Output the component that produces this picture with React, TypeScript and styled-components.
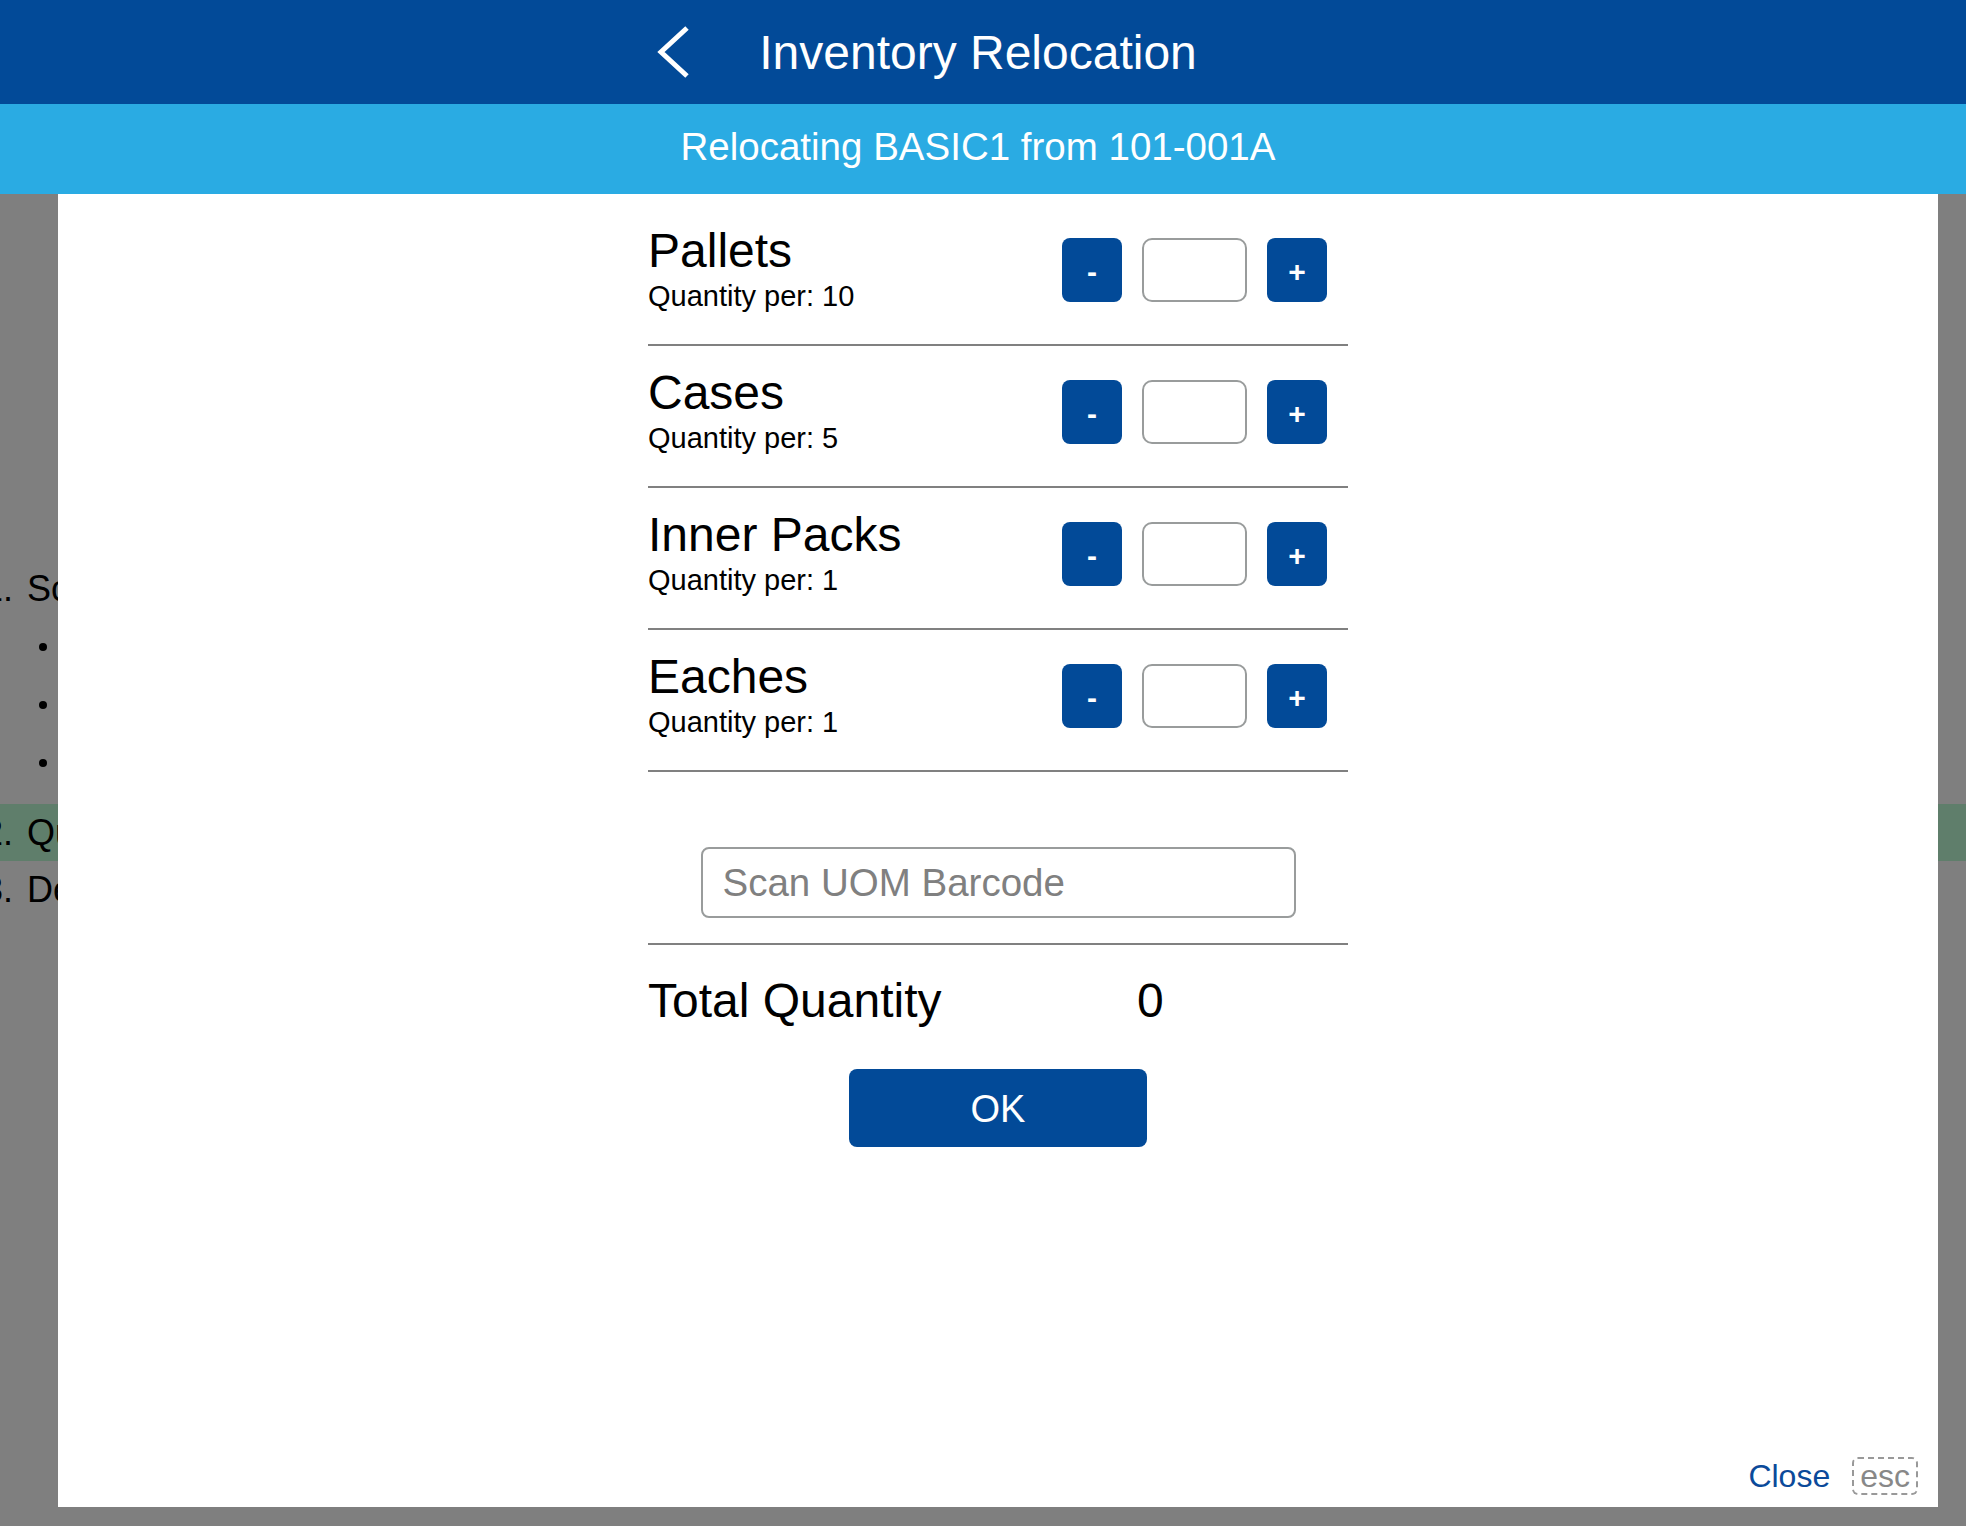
import styled, { createGlobalStyle } from 'styled-components';

const GlobalStyle = createGlobalStyle`
  html, body {
    margin: 0;
    padding: 0;
    overflow: hidden;
    background: #fff;
    font-family: "Liberation Sans", Arial, Helvetica, sans-serif;
  }
  * {
    box-sizing: border-box;
  }
`;

const HeaderBar = styled.header`
  position: relative;
  z-index: 10;
  height: 104px;
  background: #024a98;
  display: grid;
  grid-template-columns: 1fr auto 1fr;
  align-items: center;
  padding-right: 10px;
`;

const BackButton = styled.button`
  justify-self: end;
  margin-right: 67px;
  padding: 0;
  border: none;
  background: none;
  display: flex;
  cursor: pointer;
`;

const Title = styled.h1`
  margin: 0;
  font-size: 48px;
  font-weight: normal;
  color: #fff;
`;

const SubBar = styled.div`
  position: relative;
  z-index: 10;
  height: 90px;
  background: #2aabe3;
  color: #fff;
  font-size: 38.5px;
  display: flex;
  align-items: center;
  justify-content: center;
  padding: 0 10px 4px 0;
`;

// page content that sits behind the dialog
const PageBody = styled.div`
  padding-top: 366px;
  font-size: 36px;
  line-height: 58px;
  color: #000;
`;

const Step = styled.div<{ $active?: boolean }>`
  display: flex;
  background: ${(p) => (p.$active ? '#befcd6' : 'transparent')};
  line-height: ${(p) => (p.$active ? '57px' : '58px')};
`;

const StepNum = styled.span`
  width: 36px;
  margin-left: -23px;
  margin-right: 14px;
  text-align: right;
  flex-shrink: 0;
`;

const SubList = styled.div`
  margin-bottom: 12px;
`;

const SubItem = styled.div`
  display: flex;
  align-items: center;
  height: 58px;
  padding-left: 39px;
`;

const Dot = styled.span`
  width: 8px;
  height: 8px;
  border-radius: 50%;
  background: #000;
  margin-right: 24px;
`;

const Overlay = styled.div`
  position: fixed;
  inset: 0;
  z-index: 5;
  background: rgba(0, 0, 0, 0.5);
  display: flex;
  padding: 194px 28px 19px 58px;
`;

const Modal = styled.div`
  flex: 1;
  background: #fff;
  display: flex;
  flex-direction: column;
`;

const Column = styled.div`
  width: 700px;
  margin: 0 auto;
  padding-top: 10px;
  color: #000;
`;

const UomRow = styled.div`
  display: flex;
  justify-content: space-between;
  align-items: flex-start;
  padding: 17px 21px 32px 0;
  border-bottom: 2px solid #808080;
`;

const UomName = styled.div`
  font-size: 48px;
  line-height: 59px;
`;

const UomQty = styled.div`
  font-size: 29px;
  line-height: 32px;
`;

const Controls = styled.div`
  display: flex;
  gap: 20px;
  margin-top: 17px;
`;

const StepButton = styled.button`
  width: 60px;
  height: 64px;
  padding: 4px 0 0;
  border: none;
  border-radius: 8px;
  background: #024a98;
  color: #fff;
  font-family: inherit;
  font-size: 30px;
  font-weight: bold;
  line-height: 1;
  cursor: pointer;
`;

const QtyInput = styled.input`
  width: 105px;
  height: 64px;
  border: 2px solid #999c9c;
  border-radius: 10px;
  font-family: inherit;
  font-size: 28px;
  text-align: center;
  outline: none;
`;

const ScanWrap = styled.div`
  display: flex;
  justify-content: center;
  padding: 75px 0 25px;
  border-bottom: 2px solid #808080;
`;

const ScanInput = styled.input`
  width: 595px;
  height: 71px;
  border: 2px solid #999c9c;
  border-radius: 8px;
  padding: 0 20px;
  font-family: inherit;
  font-size: 38.5px;
  color: #000;
  outline: none;
  &::placeholder {
    color: #808080;
  }
`;

const TotalRow = styled.div`
  display: grid;
  grid-template-columns: 489px auto;
  padding-top: 28px;
  font-size: 48px;
  line-height: 56px;
`;

const OkButton = styled.button`
  display: block;
  width: 298px;
  height: 78px;
  margin: 40px auto 0;
  padding: 2px 0 0;
  border: none;
  border-radius: 8px;
  background: #024a98;
  color: #fff;
  font-family: inherit;
  font-size: 38px;
  cursor: pointer;
`;

const Footer = styled.div`
  margin-top: auto;
  display: flex;
  justify-content: flex-end;
  align-items: baseline;
  gap: 22px;
  padding: 0 20px 12px 0;
`;

const CloseLink = styled.a`
  font-size: 32px;
  color: #0b4a9a;
  text-decoration: none;
  cursor: pointer;
`;

const KeyHint = styled.span`
  font-size: 32px;
  line-height: 34px;
  color: #888;
  border: 2px dashed #999;
  border-radius: 6px;
  padding: 0 6px;
`;

const units = [
  { name: 'Pallets', per: 10 },
  { name: 'Cases', per: 5 },
  { name: 'Inner Packs', per: 1 },
  { name: 'Eaches', per: 1 },
];

function App() {
  return (
    <>
      <GlobalStyle />
      <HeaderBar>
        <BackButton aria-label="Back">
          <svg width="36" height="54" viewBox="0 0 36 54">
            <polyline
              points="31,3 5,27 31,51"
              fill="none"
              stroke="#fff"
              strokeWidth="5"
            />
          </svg>
        </BackButton>
        <Title>Inventory Relocation</Title>
        <div />
      </HeaderBar>
      <SubBar>Relocating BASIC1 from 101-001A</SubBar>

      <PageBody>
        <Step>
          <StepNum>1.</StepNum>
          <span>Scan the source location</span>
        </Step>
        <SubList>
          <SubItem>
            <Dot />
            Location
          </SubItem>
          <SubItem>
            <Dot />
            Item
          </SubItem>
          <SubItem>
            <Dot />
            Lot
          </SubItem>
        </SubList>
        <Step $active>
          <StepNum>2.</StepNum>
          <span>Quantity to relocate</span>
        </Step>
        <Step>
          <StepNum>3.</StepNum>
          <span>Destination location</span>
        </Step>
      </PageBody>

      <Overlay>
        <Modal>
          <Column>
            {units.map((u) => (
              <UomRow key={u.name}>
                <div>
                  <UomName>{u.name}</UomName>
                  <UomQty>Quantity per: {u.per}</UomQty>
                </div>
                <Controls>
                  <StepButton>-</StepButton>
                  <QtyInput type="text" />
                  <StepButton>+</StepButton>
                </Controls>
              </UomRow>
            ))}
            <ScanWrap>
              <ScanInput placeholder="Scan UOM Barcode" />
            </ScanWrap>
            <TotalRow>
              <span>Total Quantity</span>
              <span>0</span>
            </TotalRow>
            <OkButton>OK</OkButton>
          </Column>
          <Footer>
            <CloseLink>Close</CloseLink>
            <KeyHint>esc</KeyHint>
          </Footer>
        </Modal>
      </Overlay>
    </>
  );
}

export default App;
